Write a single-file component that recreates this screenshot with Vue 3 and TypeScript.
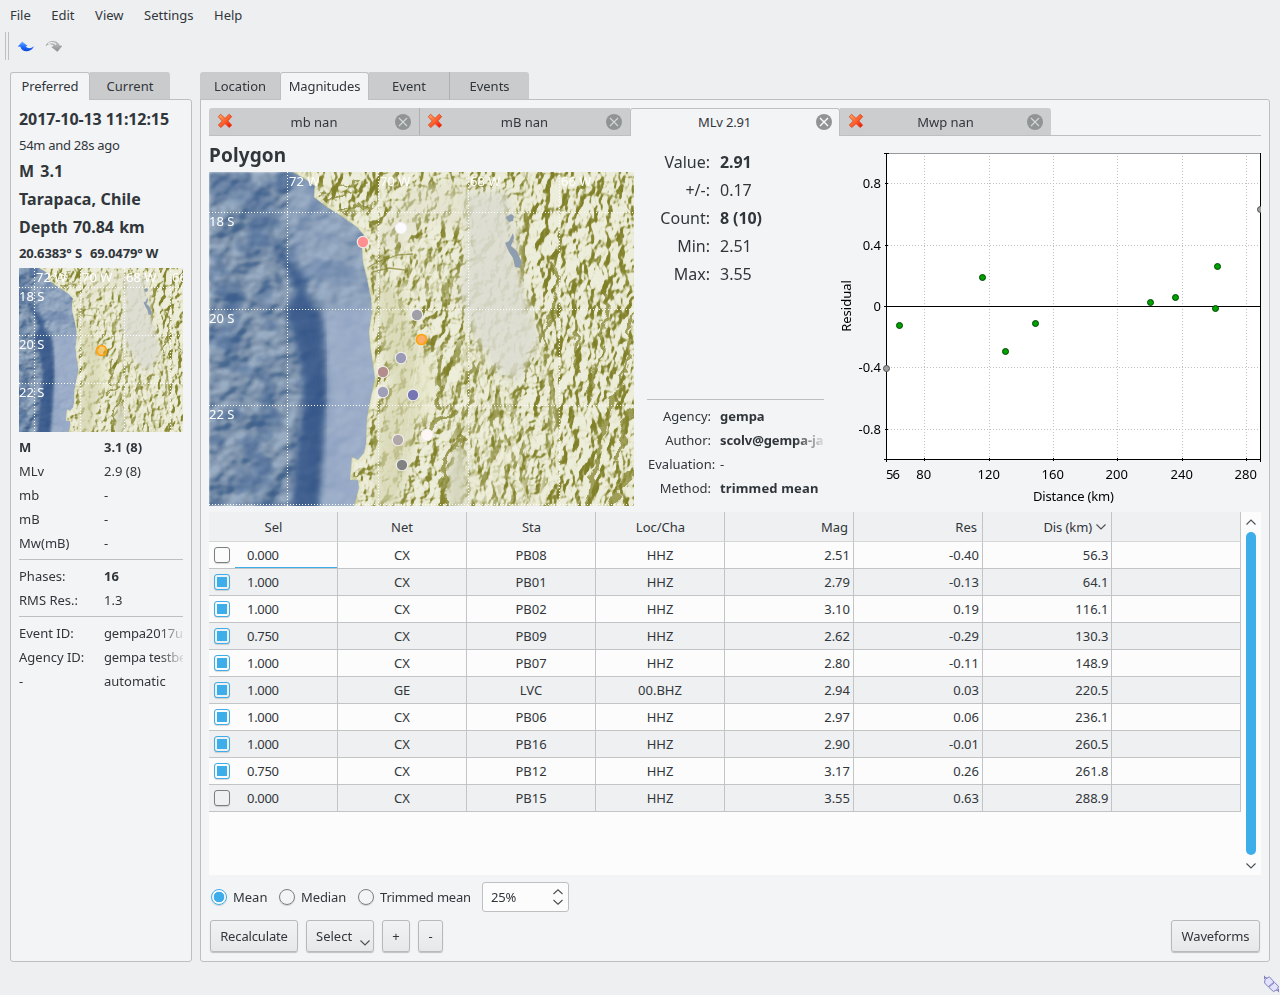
<script setup lang="ts">
interface Station { x: number; y: number; fill: string }
interface Row { on: boolean; sel: string; net: string; sta: string; cha: string; mag: string; res: string; dis: string }

const menus = ['File', 'Edit', 'View', 'Settings', 'Help']

const magTypes = [
  { name: 'mb nan', failed: true, width: 210 },
  { name: 'mB nan', failed: true, width: 211 },
  { name: 'MLv 2.91', failed: false, width: 210 },
  { name: 'Mwp nan', failed: true, width: 211 },
]

const magnitudes = [
  ['M', '3.1 (8)'], ['MLv', '2.9 (8)'], ['mb', '-'], ['mB', '-'], ['Mw(mB)', '-'],
]

const stats = [
  { k: 'Value:', v: '2.91', b: true },
  { k: '+/-:', v: '0.17', b: false },
  { k: 'Count:', v: '8 (10)', b: true },
  { k: 'Min:', v: '2.51', b: false },
  { k: 'Max:', v: '3.55', b: false },
]

const meta = [
  { k: 'Agency:', v: 'gempa', b: true },
  { k: 'Author:', v: 'scolv@gempa-ja', b: true, fade: true },
  { k: 'Evaluation:', v: '-', b: false },
  { k: 'Method:', v: 'trimmed mean', b: true },
]

const stations: Station[] = [
  { x: 192, y: 56, fill: '#fbfbff' },
  { x: 154, y: 70, fill: '#ff9090' },
  { x: 208, y: 143, fill: '#a09fa8' },
  { x: 192, y: 186, fill: '#9a9ab6' },
  { x: 174, y: 200, fill: '#b48c8c' },
  { x: 174, y: 220, fill: '#9f9fb8' },
  { x: 204, y: 223, fill: '#7676b4' },
  { x: 218, y: 263, fill: '#fff6f6' },
  { x: 189, y: 268, fill: '#b0a8a8' },
  { x: 193, y: 293, fill: '#828282' },
]

const coast = 'M84 0 L98 8 L106 14 L105 25 L118 35 L131 43 L148 55 L155 63 L153 75 L154 90 L158 106 L162 126 L163 140 L160 160 L162 180 L166 206 L163 220 L158 246 L157 272 L155 281 L149 288 L143 285 L141 308 L149 308 L150 316 L145 334'

const xTicks = [
  { x: 924.5, l: '80' }, { x: 989.5, l: '120' }, { x: 1053.5, l: '160' },
  { x: 1117.5, l: '200' }, { x: 1182.5, l: '240' }, { x: 1246.5, l: '280' },
]
const yTicks = [
  { y: 183.5, l: '0.8' }, { y: 245.5, l: '0.4' }, { y: 306.5, l: '0' },
  { y: 367.5, l: '-0.4' }, { y: 429.5, l: '-0.8' },
]
const points = [
  [899.5, 325.5], [982.5, 277.5], [1005.5, 351.5], [1035.5, 323.5],
  [1150.5, 302.5], [1175.5, 297.5], [1215.5, 308.5], [1217.5, 266.5],
]

const r = (on: boolean, sel: string, net: string, sta: string, cha: string, mag: string, res: string, dis: string): Row =>
  ({ on, sel, net, sta, cha, mag, res, dis })
const rows: Row[] = [
  r(false, '0.000', 'CX', 'PB08', 'HHZ', '2.51', '-0.40', '56.3'),
  r(true, '1.000', 'CX', 'PB01', 'HHZ', '2.79', '-0.13', '64.1'),
  r(true, '1.000', 'CX', 'PB02', 'HHZ', '3.10', '0.19', '116.1'),
  r(true, '0.750', 'CX', 'PB09', 'HHZ', '2.62', '-0.29', '130.3'),
  r(true, '1.000', 'CX', 'PB07', 'HHZ', '2.80', '-0.11', '148.9'),
  r(true, '1.000', 'GE', 'LVC', '00.BHZ', '2.94', '0.03', '220.5'),
  r(true, '1.000', 'CX', 'PB06', 'HHZ', '2.97', '0.06', '236.1'),
  r(true, '1.000', 'CX', 'PB16', 'HHZ', '2.90', '-0.01', '260.5'),
  r(true, '0.750', 'CX', 'PB12', 'HHZ', '3.17', '0.26', '261.8'),
  r(false, '0.000', 'CX', 'PB15', 'HHZ', '3.55', '0.63', '288.9'),
]

const reliefs = [
  { id: 'plainRelief', freq: '.085 .07', seed: 12, scale: 7 },
  { id: 'rangeRelief', freq: '.08 .05', seed: 21, scale: 10 },
]
</script>

<template>
  <div class="window">
    <nav class="menubar">
      <span v-for="m in menus" :key="m">{{ m }}</span>
    </nav>
    <div class="toolbar">
      <i class="handle"></i>
      <svg width="18" height="14" viewBox="0 0 18 14">
        <defs>
          <linearGradient id="undo" x1="0" y1="0" x2="0" y2="1"><stop offset="0" stop-color="#7fb0ff" /><stop offset=".55" stop-color="#1f6bff" /><stop offset="1" stop-color="#0a48d8" /></linearGradient>
        </defs>
        <path d="M5.2 1.4 L.8 6.6 L3.4 6.8 C4.2 9.8 6.5 11.4 10 11.2 C13.2 11 15.8 9.3 17 6.2 C15 7.8 12.8 8.5 11 8 C9.8 7.6 9 7 8.6 6.2 L10.6 6 Z" fill="url(#undo)" />
      </svg>
      <svg width="18" height="14" viewBox="0 0 18 14">
        <defs>
          <linearGradient id="redo" x1="0" y1="0" x2="0" y2="1"><stop offset="0" stop-color="#c8c8c8" /><stop offset="1" stop-color="#8c8c8c" /></linearGradient>
        </defs>
        <path d="M1 5.6 C2.6 2.4 5.4 1.2 8.4 1.4 C11.4 1.6 13.6 3.2 14.4 6 L16.8 6 L12.4 11.4 L6.8 7 L9.2 6.6 C8.6 4.8 7 3.8 5 3.8 C3.4 3.8 2.2 4.5 1 5.6 Z" fill="url(#redo)" stroke="#929292" stroke-width=".6" />
        <path d="M3 3.8 C5.6 2 9.4 2.2 11 4.6" fill="none" stroke="#f0f0f0" stroke-width="1.1" />
      </svg>
    </div>

    <main class="body">
      <aside class="side">
        <div class="tabs">
          <span class="tab active w80">Preferred</span><span class="tab w80 last">Current</span>
        </div>
        <section class="pane left">
          <div class="big date">2017-10-13 11:12:15</div>
          <div class="line ago">54m and 28s ago</div>
          <div class="big wide">M 3.1</div>
          <div class="big place">Tarapaca, Chile</div>
          <div class="big depth">Depth 70.84 km</div>
          <div class="line bold coords"><span>20.6383° S</span><span>69.0479° W</span></div>
          <svg class="minimap" width="164" height="164" viewBox="0 0 164 164">
            <svg width="164" height="164" viewBox="47 2 328 328"><use href="#terrain" /></svg>
            <g class="graticule">
              <path v-for="x in [15.5, 61.5, 105.5, 151.5]" :key="x" :d="`M${x} 0V164`" />
              <path v-for="y in [19.5, 67.5, 115.5]" :key="y" :d="`M0 ${y}H164`" />
            </g>
            <g class="geo">
              <text x="17" y="14">72 W</text><text x="63" y="14">70 W</text><text x="107" y="14">68 W</text><text x="153" y="14">66 W</text>
              <text x="0" y="33">18 S</text><text x="0" y="81">20 S</text><text x="0" y="129">22 S</text>
            </g>
            <circle cx="82.5" cy="82.5" r="5" fill="#ffa500" fill-opacity=".45" stroke="#ffa010" stroke-width="1.7" />
          </svg>
          <dl class="kv first">
            <div v-for="([k, v], i) in magnitudes" :key="k" :class="{ bold: i === 0 }"><dt>{{ k }}</dt><dd>{{ v }}</dd></div>
          </dl>
          <hr>
          <dl class="kv">
            <div><dt>Phases:</dt><dd class="bold">16</dd></div>
            <div><dt>RMS Res.:</dt><dd>1.3</dd></div>
          </dl>
          <hr>
          <dl class="kv">
            <div><dt>Event ID:</dt><dd class="fade">gempa2017u</dd></div>
            <div><dt>Agency ID:</dt><dd class="fade">gempa testbe</dd></div>
            <div><dt>-</dt><dd>automatic</dd></div>
          </dl>
        </section>
      </aside>

      <section class="work">
        <div class="tabs">
          <span class="tab w80 start">Location</span><span class="tab active w89">Magnitudes</span><span class="tab w80">Event</span><span class="tab w80 last sep">Events</span>
        </div>
        <div class="pane right">
          <div class="subtabs">
            <div v-for="(t, i) in magTypes" :key="t.name" class="subtab" :class="{ active: !t.failed, sep: i === 1, last: i === 3 }" :style="{ width: t.width + 'px' }">
              <svg v-if="t.failed" class="fail" width="16" height="16" viewBox="0 0 16 16">
                <defs><linearGradient :id="'x' + i" x1="0" y1="0" x2="1" y2="1"><stop offset="0" stop-color="#ffb06a" /><stop offset=".55" stop-color="#ff5a26" /><stop offset="1" stop-color="#f00000" /></linearGradient></defs>
                <path d="M3.6 1.3 L8 5.4 L12.2 1.3 L14.7 3.6 L10.8 7.9 L14.7 12.2 L12.2 14.5 L8 10.6 L3.8 14.5 L1.3 12.1 L5.3 8 L1.3 3.8 Z" :fill="`url(#x${i})`" stroke="#d8401c" stroke-width=".8" stroke-linejoin="round" />
              </svg>
              <b>{{ t.name }}</b>
              <svg width="16" height="16" viewBox="0 0 16 16" class="close"><circle cx="8" cy="8" r="8" /><path d="M4 4L12 12M12 4L4 12" /></svg>
            </div>
          </div>

          <div class="overview">
            <div class="mapcol">
              <h2>Polygon</h2>
              <svg class="map" width="425" height="334" viewBox="0 0 425 334">
                <defs>
                  <filter id="seaRelief" x="0" y="0" width="100%" height="100%" color-interpolation-filters="sRGB">
                    <feTurbulence type="fractalNoise" baseFrequency=".032 .04" numOctaves="3" seed="7" result="n" />
                    <feColorMatrix in="n" values="0 0 0 0 0  0 0 0 0 0  0 0 0 0 0  1 0 0 0 0" result="h" />
                    <feDiffuseLighting in="h" surfaceScale="8" diffuseConstant="1.05" lighting-color="#fff"><feDistantLight azimuth="225" elevation="52" /></feDiffuseLighting>
                    <feGaussianBlur stdDeviation=".8" />
                    <feComponentTransfer>
                      <feFuncR type="table" tableValues=".22 .24 .26 .28 .31 .37 .45 .5 .54 .6" />
                      <feFuncG type="table" tableValues=".34 .36 .38 .4 .43 .48 .54 .58 .62 .68" />
                      <feFuncB type="table" tableValues=".5 .52 .54 .56 .58 .61 .65 .68 .71 .77" />
                    </feComponentTransfer>
                  </filter>
                  <filter id="mottle" x="0" y="0" width="100%" height="100%" color-interpolation-filters="sRGB">
                    <feTurbulence type="fractalNoise" baseFrequency=".03 .034" numOctaves="3" seed="33" />
                    <feColorMatrix values="0 0 0 0 .22  0 0 0 0 .36  0 0 0 0 .56  4.5 0 0 0 -2.2" />
                  </filter>
                  <filter v-for="f in reliefs" :id="f.id" :key="f.id" x="0" y="0" width="100%" height="100%" color-interpolation-filters="sRGB">
                    <feTurbulence type="fractalNoise" :baseFrequency="f.freq" numOctaves="3" :seed="f.seed" result="n" />
                    <feColorMatrix in="n" values="0 0 0 0 0  0 0 0 0 0  0 0 0 0 0  1 0 0 0 0" result="h" />
                    <feDiffuseLighting in="h" :surfaceScale="f.scale" diffuseConstant="1.12" lighting-color="#fff"><feDistantLight azimuth="215" elevation="50" /></feDiffuseLighting>
                    <feGaussianBlur stdDeviation=".35" />
                    <feComponentTransfer>
                      <feFuncR type="table" tableValues=".5 .52 .53 .55 .6 .7 .8 .87 .9 .92 .93" />
                      <feFuncG type="table" tableValues=".5 .52 .53 .55 .6 .7 .8 .87 .9 .92 .93" />
                      <feFuncB type="table" tableValues=".16 .18 .2 .24 .32 .46 .63 .74 .8 .84 .86" />
                    </feComponentTransfer>
                  </filter>
                  <filter id="soft2" x="-30%" width="160%"><feGaussianBlur stdDeviation="3" /></filter>
                  <filter id="soft4" x="-10%" width="120%"><feGaussianBlur stdDeviation="5" /></filter>
                  <filter id="ridge" x="-10%" y="-10%" width="120%" height="120%">
                    <feTurbulence type="fractalNoise" baseFrequency=".09" numOctaves="2" seed="4" />
                    <feDisplacementMap in="SourceGraphic" scale="14" xChannelSelector="R" yChannelSelector="G" />
                    <feGaussianBlur stdDeviation=".4" />
                  </filter>
                  <clipPath id="land"><path :d="coast + ' H425 V0 Z'" /></clipPath>
                  <clipPath id="sea"><path :d="coast + ' H0 V0 Z'" /></clipPath>
                  <mask id="ranges" maskUnits="userSpaceOnUse" x="0" y="0" width="425" height="334">
                    <g fill="#fff" filter="url(#soft4)">
                      <path d="M320 -10 H435 V344 H330 L345 250 L338 200 L318 150 L308 90 Z" />
                      <path d="M90 -10 H185 L175 30 L130 44 Z" />
                      <path d="M165 86 L215 76 L246 100 L240 130 L210 118 L170 108 Z M225 180 L262 165 L300 220 L320 270 L318 334 L262 334 L244 260 Z" opacity=".75" />
                    </g>
                  </mask>
                </defs>
                <g id="terrain">
                  <g clip-path="url(#sea)">
                    <rect width="180" height="334" filter="url(#seaRelief)" />
                    <rect width="180" height="334" filter="url(#mottle)" opacity=".5" />
                    <path d="M84 -5 L160 50 L175 200 L160 340 L108 340 L117 220 L116 160 L106 120 L88 90 L80 50 Z" fill="#9db0ca" opacity=".5" filter="url(#soft2)" />
                    <path d="M112 140 L170 130 L175 200 L160 340 L112 340 L119 220 Z" fill="#a2b3ce" opacity=".68" filter="url(#soft2)" />
                    <path d="M66 76 L84 90 L98 122 L112 150 L115 200 L112 250 L108 340 L82 340 L88 280 L93 246 L94 206 L86 165 L76 140 L88 118 Z" fill="#35568a" opacity=".85" filter="url(#soft2)" />
                    <path d="M0 0 H30 L62 22 L76 60 L60 54 L30 30 L0 26 Z" fill="#3c5f91" opacity=".3" filter="url(#soft2)" />
                    <path d="M104 124 C112 145 115 170 114 205 C114 250 109 290 106 340" fill="none" stroke="#2b4b7c" stroke-width="5" opacity=".5" filter="url(#soft2)" />
                  </g>
                  <g clip-path="url(#land)">
                    <rect x="80" width="345" height="334" filter="url(#plainRelief)" />
                    <g mask="url(#ranges)"><rect x="80" width="345" height="334" filter="url(#rangeRelief)" /></g>
                    <g filter="url(#soft4)">
                      <path d="M256 20 L300 20 L308 90 L318 128 L330 168 L308 212 L290 200 L262 160 L250 120 L258 80 Z" fill="#dcdcd1" opacity=".9" />
                      <path d="M168 106 L190 118 L206 160 L218 190 L208 250 L198 300 L190 334 L166 334 L170 250 L182 210 L172 170 Z" fill="#d6d5b2" opacity=".72" />
                      <path d="M216 180 L226 195 L224 236 L212 260 L206 200 Z" fill="#e9e9ce" opacity=".9" />
                      <path d="M238 300 L250 270 L258 290 L256 340 L240 340 Z" fill="#d4d5bd" opacity=".95" />
                      <path d="M200 16 L250 8 L262 30 L250 60 L220 44 L185 76 L165 70 Z" fill="#dfdec8" opacity=".55" />
                    </g>
                    <g fill="none" stroke="#85852f" stroke-linecap="round" stroke-width="2" opacity=".75" filter="url(#ridge)">
                      <path d="M108 26 C122 14 138 18 150 6 M114 30 C130 24 140 24 156 12 M130 38 C144 34 154 40 166 30" />
                      <path d="M231 186 C226 200 234 216 229 234" stroke-width="4.5" />
                      <path d="M254 266 C240 278 232 288 235 306 C230 318 236 326 236 334 M250 240 C236 248 228 244 222 254" stroke-width="4" />
                      <path d="M411 215 C400 230 404 242 394 254 C388 270 398 280 388 292 C380 305 388 320 378 334 M424 240 C412 255 416 270 408 282 M424 300 L400 330" stroke-width="6" />
                      <path d="M397 120 C404 145 390 156 396 178 C390 194 382 204 380 225 M424 140 C416 160 422 190 412 210 M367 150 C372 170 362 180 368 200 M336 170 L350 110 L340 90" stroke-width="3.5" />
                    </g>
                    <path d="M160 95 C170 88 180 87 188 83 L204 82 M164 100 L180 96 L196 98" fill="none" stroke="#85852f" stroke-width="1.3" opacity=".7" />
                    <path d="M297 45 L302 42 L305 44 L304 49 L300 50 L297 46 Z M304 61 L305 66 L302 74 L308 79 L310 84 L313 90 L311 96 L306 95 L304 86 L300 80 L296 71 L300 69 Z" fill="#8e9eae" />
                    <path :d="coast" fill="none" stroke="#e5e6c4" stroke-width="6" opacity=".75" />
                  </g>
                  <path :d="coast" fill="none" stroke="#a8af9b" stroke-width=".7" opacity=".7" />
                </g>
                <g class="rays">
                  <path v-for="s in stations" :key="`${s.x}-${s.y}`" :d="`M212 167L${s.x} ${s.y}`" />
                </g>
                <g class="graticule">
                  <path v-for="x in [78.5, 169.5, 259.5, 350.5]" :key="x" :d="`M${x} 0V334`" />
                  <path v-for="y in [40.5, 137.5, 233.5, 332.5]" :key="y" :d="`M0 ${y}H425`" />
                </g>
                <g class="geo">
                  <text x="80" y="14">72 W</text><text x="171" y="14">70 W</text><text x="261" y="14">68 W</text><text x="352" y="14">66 W</text>
                  <text x="0" y="54">18 S</text><text x="0" y="151">20 S</text><text x="0" y="247">22 S</text>
                </g>
                <circle v-for="s in stations" :key="`${s.y}-${s.x}`" :cx="s.x" :cy="s.y" r="5.7" :fill="s.fill" stroke="#f0efee" stroke-width="1.1" />
                <circle cx="212.5" cy="167.5" r="5" fill="#ff9d50" fill-opacity=".8" stroke="#ffa30a" stroke-width="1.7" />
              </svg>
            </div>

            <div class="info">
              <dl class="stats"><div v-for="s in stats" :key="s.k"><dt>{{ s.k }}</dt><dd :class="{ bold: s.b }">{{ s.v }}</dd></div></dl>
              <div class="grow"></div>
              <hr>
              <dl class="meta"><div v-for="m in meta" :key="m.k"><dt>{{ m.k }}</dt><dd :class="{ bold: m.b, fade: m.fade }">{{ m.v }}</dd></div></dl>
            </div>

            <svg class="chart" width="427" height="370" viewBox="834 136 427 370">
              <rect x="887" y="154" width="374" height="305" fill="#fff" />
              <g class="grid">
                <path v-for="t in xTicks" :key="t.x" :d="`M${t.x} 156V459`" />
                <path v-for="t in yTicks" :key="t.y" :d="`M888 ${t.y}H1260`" />
              </g>
              <path d="M887 153.5H1260" stroke="#97999b" />
              <g stroke="#000" shape-rendering="crispEdges">
                <path d="M886.5 153V462M1260.5 153V462M884 459.5H1261M884 153.5H889M884 306.5H1261" />
                <path v-for="t in xTicks" :key="t.l" :d="`M${t.x} 458V461`" />
                <path v-for="t in yTicks" :key="t.l" :d="`M885 ${t.y}H888`" />
              </g>
              <g class="axis">
                <text v-for="t in yTicks" :key="t.l" x="881" :y="t.y + 4.5" text-anchor="end">{{ t.l }}</text>
                <text x="886" y="479" textLength="14">56</text>
                <text v-for="t in xTicks" :key="t.l" :x="t.x - .8" y="479" text-anchor="middle">{{ t.l }}</text>
                <text x="1033" y="501" textLength="81">Distance (km)</text>
                <text transform="translate(851 306) rotate(-90)" text-anchor="middle">Residual</text>
              </g>
              <circle v-for="p in points" :key="p[0]" :cx="p[0]" :cy="p[1]" r="3" fill="#00a000" stroke="#004800" />
              <circle cx="886.5" cy="368.5" r="3" fill="#a0a0a0" stroke="#505050" />
              <circle cx="1260.5" cy="209.5" r="3" fill="#a0a0a0" stroke="#505050" />
            </svg>
          </div>

          <div class="tablebox">
            <div class="table">
              <div class="tr head">
                <span class="nudge">Sel</span><span>Net</span><span class="nudge">Sta</span><span class="nudge">Loc/Cha</span><span class="num">Mag</span><span class="num">Res</span>
                <span class="num sorted">Dis (km)<svg width="10" height="6" viewBox="0 0 10 6"><path d="M.5 .5L5 5L9.5 .5" /></svg></span><span></span>
              </div>
              <div v-for="(row, i) in rows" :key="row.sta" class="tr" :class="{ alt: i % 2 === 1, current: i === 0 }">
                <span class="sel"><i class="check" :class="{ on: row.on }"></i><em>{{ row.sel }}</em></span>
                <span>{{ row.net }}</span><span>{{ row.sta }}</span><span>{{ row.cha }}</span>
                <span class="num">{{ row.mag }}</span><span class="num">{{ row.res }}</span><span class="num dis">{{ row.dis }}</span><span></span>
              </div>
            </div>
            <div class="scroll">
              <svg width="10" height="6" viewBox="0 0 10 6"><path d="M.5 5.5L5 1L9.5 5.5" /></svg>
              <i class="thumb"></i>
              <svg width="10" height="6" viewBox="0 0 10 6"><path d="M.5 .5L5 5L9.5 .5" /></svg>
            </div>
          </div>

          <div class="options">
            <label class="o1"><i class="radio on"></i>Mean</label>
            <label class="o2"><i class="radio"></i>Median</label>
            <label class="o3"><i class="radio"></i>Trimmed mean</label>
            <div class="spin">25%<svg width="10" height="16" viewBox="0 0 10 16"><path d="M.5 5L5 .8L9.5 5M.5 11L5 15.2L9.5 11" /></svg></div>
          </div>
          <div class="buttons">
            <button class="b1">Recalculate</button>
            <button class="b2">Select<svg width="10" height="6" viewBox="0 0 10 6"><path d="M.5 .5L5 5L9.5 .5" /></svg></button>
            <button class="b3">+</button>
            <button class="b4">-</button>
            <div class="grow"></div>
            <button class="b5">Waveforms</button>
          </div>
        </div>
      </section>
    </main>

    <footer class="status">
      <svg width="17" height="18" viewBox="0 0 17 18" fill="#e4e2fa" stroke="#8280c4" stroke-width="1">
        <path d="M1.5 .8V4M2 2.2L4.5 3.2M15.5 17.2V14M15 15.8L12.5 14.8" fill="none" />
        <path d="M2 4.4L6.4 1.8L11 7L5.2 11.8L1.6 8Z" />
        <path d="M5.8 12.4L11.5 7.4L15.4 11.2L14.8 14L10.6 16.6Z" />
      </svg>
    </footer>
  </div>
</template>

<style>
body { margin: 0; background: #eeeff1; }
</style>

<style scoped>
.window { width: 1280px; height: 995px; box-sizing: border-box; display: flex; flex-direction: column; background: #eeeff1; color: #31363b; font: 13px/24px "Noto Sans", sans-serif; overflow: hidden; white-space: nowrap; }
.window * { box-sizing: border-box; }
svg { display: block; flex: none; }
dl, dd, h2 { margin: 0; }
hr { margin: 4px 0; border: 0; height: 1px; background: #bdbfc1; flex: none; }
.bold { font-weight: 700; }
.grow { flex: 1; }
.menubar { height: 31px; display: flex; gap: 20.5px; padding-left: 10px; line-height: 31px; }
.toolbar { height: 41px; display: flex; align-items: flex-start; padding: 0 0 0 5px; gap: 10px; }
.toolbar svg { margin-top: 9px; }
.handle { width: 4px; height: 28px; margin: 1px -2px 0 0; border: solid #bdbfc1; border-width: 0 1px; }
.body { display: flex; gap: 8px; padding: 0 10px; height: 890px; }
.side { width: 182px; display: flex; flex-direction: column; }
.work { width: 1070px; display: flex; flex-direction: column; }
.tabs { display: flex; height: 28px; margin-bottom: -1px; z-index: 1; }
.tab { height: 28px; text-align: center; line-height: 29px; background: #c9cbcc; border-bottom: 1px solid #bdbfc1; }
.tab.active { background: #f3f4f6; border: 1px solid #bdbfc1; border-bottom: 0; border-radius: 3px 3px 0 0; line-height: 27px; letter-spacing: -.1px; }
.tab.start { border-top-left-radius: 3px; }
.tab.last { border-top-right-radius: 3px; }
.tab.sep { border-left: 1px solid #aeb0b2; }
.w80 { width: 80px; } .w89 { width: 89px; }
.pane { flex: 1; border: 1px solid #bdbfc1; border-radius: 0 3px 3px 3px; background: #f3f4f6; display: flex; flex-direction: column; }
.left { padding: 5px 8px; }
.big { font-size: 16px; font-weight: 700; line-height: 28px; }
.date { letter-spacing: -.08px; }
.place { letter-spacing: .13px; }
.wide { word-spacing: 2px; }
.depth { word-spacing: 1px; }
.ago { letter-spacing: -.28px; }
.coords { display: flex; gap: 8px; letter-spacing: -.14px; }
.minimap { margin: 3px 0; }
.kv div { display: flex; height: 24px; }
.kv dt { width: 85px; }
.kv dd { width: 79px; }
.fade { overflow: hidden; -webkit-mask-image: linear-gradient(90deg, #000 70%, transparent 104%); mask-image: linear-gradient(90deg, #000 70%, transparent 104%); }
.kv .fade { letter-spacing: -.18px; }
.graticule path { stroke: #fff; stroke-dasharray: 1 2; fill: none; shape-rendering: crispEdges; }
.geo text { fill: #fff; font: 13px "Noto Sans", sans-serif; }
.rays path { stroke: #f0f0e0; stroke-width: .7; opacity: .45; }

.right { padding: 8px 8px 0; }
.subtabs { display: flex; height: 28px; border-bottom: 1px solid #bdbfc1; }
.subtab { height: 27px; display: flex; align-items: center; padding: 0 8px; background: #cccdcf; }
.subtab b { flex: 1; text-align: center; font-weight: 400; line-height: 27px; padding-top: 1px; }
.subtab:first-child { border-top-left-radius: 3px; }
.subtab.sep { border-left: 1px solid #aeb0b2; padding-left: 7px; }
.subtab.last { border-top-right-radius: 3px; }
.subtab.active { height: 28px; background: #f3f4f6; border: 1px solid #bdbfc1; border-bottom: 0; border-radius: 3px 3px 0 0; padding: 0 7px; }
.active b { padding: 0 5px 1px 0; letter-spacing: -.2px; }
.fail { margin-top: -1px; }
.close { margin-top: 1px; }
.active .close { margin-top: -1px; }
.close circle { fill: #919495; }
.close path { stroke: #d6d7d8; stroke-width: 1.1; fill: none; }
.active .close path { stroke: #fff; stroke-width: 1.3; }
.overview { display: flex; height: 370px; flex: none; }
.mapcol { width: 425px; }
h2 { height: 36px; line-height: 38px; font-size: 19px; font-weight: 700; letter-spacing: .12px; }
.info { width: 177px; margin: 0 10px 0 13px; padding: 12px 0 6px; display: flex; flex-direction: column; }
.stats div, .meta div { display: flex; }
.stats { font-size: 16px; line-height: 28px; }
.stats dt { width: 63px; text-align: right; margin-right: 10px; }
.stats .bold { letter-spacing: -.12px; }
.meta dt { width: 64px; display: flex; justify-content: flex-end; margin-right: 9px; }
.meta div:nth-child(3) dt { justify-content: flex-start; padding-left: 1px; }
.meta dd { width: 104px; }
.meta div:last-child dd { letter-spacing: .15px; }
.meta .fade { letter-spacing: -.1px; -webkit-mask-image: linear-gradient(90deg, #000 72%, transparent 103%); mask-image: linear-gradient(90deg, #000 72%, transparent 103%); }
.chart .grid path { stroke: #c0c0c0; stroke-dasharray: 1 2; shape-rendering: crispEdges; }
.axis text { font: 13px "Noto Sans", sans-serif; fill: #000; }

.tablebox { margin-top: 6px; height: 363px; flex: none; display: flex; background: #fcfcfc; }
.table { width: 1032px; }
.tr { display: grid; grid-template-columns: repeat(8, 129px); height: 27px; background: #fcfcfc; }
.tr > span { border: solid #c3c4c5; border-width: 0 1px 1px 0; text-align: center; line-height: 26px; height: 27px; }
.tr.alt { background: #eff0f1; }
.tr.head { height: 30px; background: #eff0f1; }
.tr.head > span { height: 30px; line-height: 30px; border-bottom-color: #d5d6d8; }
.tr.head > .nudge { padding-left: 1px; }
.tr > .num { text-align: right; padding-right: 3px; }
.tr > .dis { padding-right: 2.5px; }
.tr.head > .num { padding-right: 5px; }
.tr.head > .sorted { display: flex; align-items: center; justify-content: flex-end; gap: 4px; letter-spacing: -.1px; }
.sel { display: flex; align-items: center; padding-left: 5px; }
.sel em { font-style: normal; flex: 1; align-self: stretch; margin-left: 5px; padding-left: 12px; text-align: left; letter-spacing: -.3px; }
.current .sel em { border-bottom: 1px solid #3daee9; }
.check { width: 16px; height: 16px; border: 1px solid #7b7e81; border-radius: 3px; box-shadow: 0 1px 1px rgba(0, 0, 0, .15); }
.check.on { border-color: #3daee9; background: #3daee9; background-clip: content-box; padding: 2px; }
.scroll { width: 20px; padding: 7px 0 6px; display: flex; flex-direction: column; align-items: center; }
.thumb { width: 10px; height: 323px; margin: 7px 0 8px; border-radius: 5px; background: #3daee9; }
.scroll path, .sorted path, .spin path, .buttons path { fill: none; stroke: #4a4e52; stroke-width: 1.1; }

.options { display: flex; align-items: center; height: 30px; margin-top: 7px; padding-left: 2px; }
.options label { display: flex; align-items: center; gap: 6px; }
.o1 { width: 68px; } .o2 { width: 79px; letter-spacing: -.1px; } .o3 { width: 124px; letter-spacing: -.18px; }
.radio { width: 16px; height: 16px; border: 1px solid #7b7e81; border-radius: 50%; box-shadow: 0 1px 1px rgba(0, 0, 0, .15); }
.radio.on { border-color: #3daee9; background: radial-gradient(circle, #3daee9 5px, #fcfcfc 5.6px); }
.spin { width: 87px; height: 30px; padding: 0 5px 0 8px; display: flex; align-items: center; justify-content: space-between; border: 1px solid #bdbfc1; border-radius: 3px; background: #fcfcfc; letter-spacing: -.15px; }
.buttons { display: flex; gap: 8px; margin-top: 8px; padding: 0 1px; }
button { height: 32px; padding: 0; border: 1px solid #b7b9bb; border-radius: 3px; background: linear-gradient(#f1f2f3, #e7e8ea); box-shadow: 0 1px 1px rgba(0, 0, 0, .22); font: inherit; color: inherit; }
.b1 { width: 88px; } .b3 { width: 28px; } .b4 { width: 25px; } .b5 { width: 89px; }
.b1, .b5 { letter-spacing: -.15px; }
.b2 { width: 68px; display: flex; align-items: center; justify-content: space-between; padding: 0 3px 0 9px; }
.b2 svg { margin-top: 13px; }
.status { flex: 1; display: flex; justify-content: flex-end; align-items: flex-start; padding-top: 13px; }
</style>
